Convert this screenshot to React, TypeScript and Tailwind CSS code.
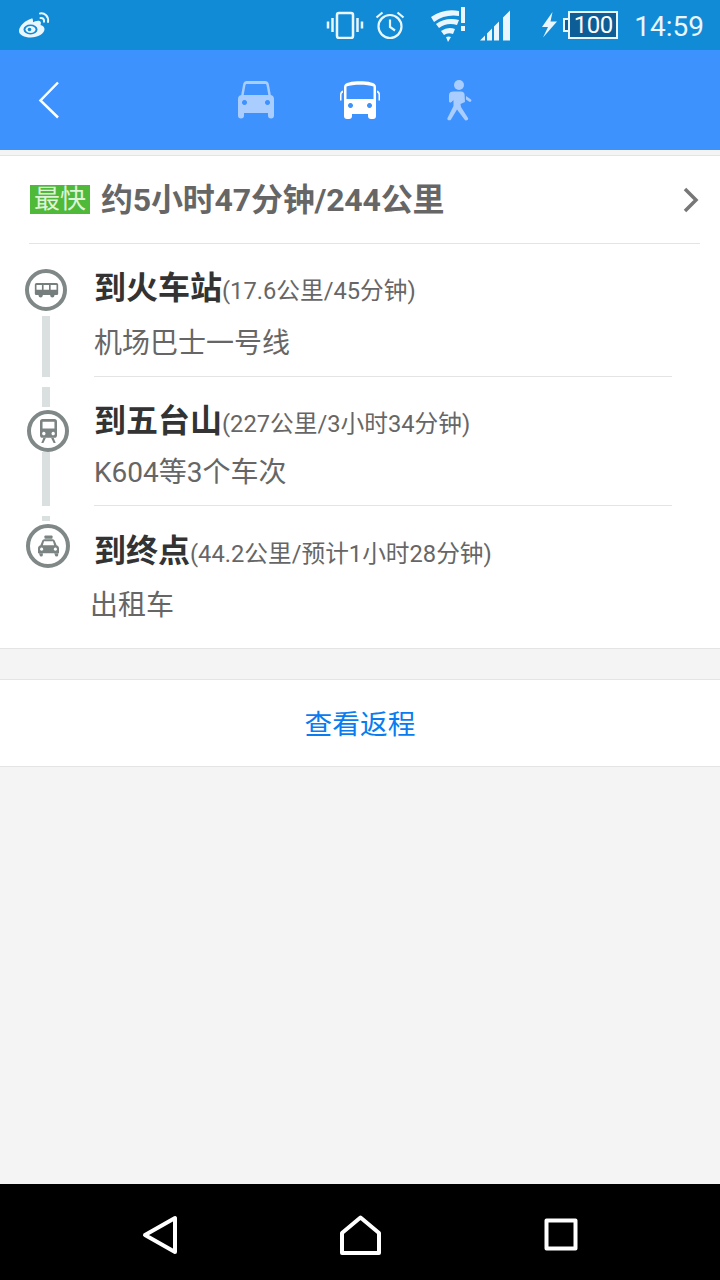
import { FunctionComponent, ReactNode } from "react";

const WeiboIcon = () => (
  <svg width="34" height="28" viewBox="0 0 34 28" fill="none">
    <path fillRule="evenodd" clipRule="evenodd" fill="#eaf6fd" d="M14 7.500C7.500 9 1 15 1 20c0 4 5.500 6.500 11.500 6.500 7.500 0 14-4 14-8.500 0-2.500-2.500-3.500-4-4 .8-2 .5-3.500-1-4-2-.6-5 .5-6.500 1.200.2-2-.5-4.500-1.500-3.700z" />
    <ellipse cx="12.500" cy="18.500" rx="7" ry="5" fill="#128bd6" />
    <ellipse cx="12.500" cy="18.500" rx="5" ry="3.500" fill="#eaf6fd" />
    <circle cx="11.500" cy="18.500" r="1.800" fill="#128bd6" />
    <path d="M22 2.500c4.500-1 9 3 8 8.500M22.500 7c2.200-.4 4 1.300 3.500 3.800" stroke="#eaf6fd" strokeWidth="2" strokeLinecap="round" />
  </svg>
);

const VibrateIcon = () => (
  <svg width="38" height="28" viewBox="0 0 38 28" fill="none" stroke="#eaf6fd">
    <rect x="11" y="2" width="16" height="25" rx="2" strokeWidth="2.500" />
    <path d="M6.500 7v14M2 10.500v7M31.500 7v14M36 10.500v7" strokeWidth="2.500" />
  </svg>
);

const AlarmIcon = () => (
  <svg width="30" height="30" viewBox="0 0 30 30" fill="none" stroke="#eaf6fd" strokeWidth="2.200">
    <circle cx="15" cy="16.500" r="11.500" />
    <path d="M15 9.500v7.500l5 3.500M1.500 7.500l6-5M28.500 7.500l-6-5" />
  </svg>
);

const WifiIcon = () => (
  <svg width="36" height="36" viewBox="0 0 36 36" fill="#eaf6fd">
    <path d="M1 10Q14 1 29 4V9Q15 7 4 15zM6 17Q16 10 29 13L27 18Q17 15 9 21zM11 24Q18 19 25 22L23 27Q18 25 14 28zM16 30Q19 29 21 30L18 35z" />
    <rect x="31" y="0" width="4" height="16" />
    <rect x="31" y="19" width="4" height="5" />
  </svg>
);

const SignalIcon = () => (
  <svg width="31" height="31" viewBox="0 0 31 31" fill="#eaf6fd">
    <path d="M0 30.500 5 25.500V30.500zM7 23.500 12 18.500V30.500H7zM14 16.500 19 11.500V30.500H14zM23 7.500 30 .5V30.500H23z" />
  </svg>
);

const BoltIcon = () => (
  <svg width="17" height="26" viewBox="0 0 17 26" fill="#eaf6fd">
    <path d="M11.500 0 1 15h6L2 25.500 16 9.500H9.500z" />
  </svg>
);

const CarIcon = () => (
  <svg width="36" height="38" viewBox="0 0 36 38" fill="#a9cdfe">
    <path fillRule="evenodd" clipRule="evenodd" d="M5 4C5.400 1.500 6.500 0 9 0h18c2.500 0 3.600 1.500 4 4l2 11h-2.500L28.500 4c-.1-.6-.5-1-1-1h-19c-.5 0-.9.4-1 1L5.500 15H3z" />
    <path fillRule="evenodd" clipRule="evenodd" d="M4 14h28c2.500 0 4 1.500 4 4v14H0V18c0-2.500 1.500-4 4-4zM6.500 19a2.500 2.500 0 1 0 .01 0zM29.500 19a2.500 2.500 0 1 0 .01 0z" />
    <path d="M0 32h6v2.500a2.800 2.800 0 0 1-6 0zM30 32h6v2.500a2.800 2.800 0 0 1-6 0z" />
  </svg>
);

const BusIcon = () => (
  <svg width="40" height="38" viewBox="0 0 40 38" fill="#fff">
    <path d="M0 14c0-2.500 1-4 3-4.500v2C2 12 1.500 13 1.500 14v5.500H0zM40 14c0-2.500-1-4-3-4.500v2c1 .5 1.500 1.500 1.500 2.500v5.500H40z" />
    <path fillRule="evenodd" clipRule="evenodd" d="M4 6c0-3 2-4 5-4.600C15 0 25 0 31 1.400c3 .6 5 1.600 5 4.600v27H4zM6.500 5.500V18h27V5.500C27 3 13 3 6.500 5.500zM10.500 22a2.500 2.500 0 1 0 .01 0zM29.500 22a2.500 2.500 0 1 0 .01 0z" />
    <path d="M4 33h8v2a3 3 0 0 1-3 3H7a3 3 0 0 1-3-3zM28 33h8v2a3 3 0 0 1-3 3h-2a3 3 0 0 1-3-3z" />
  </svg>
);

const WalkIcon = () => (
  <svg width="26" height="41" viewBox="0 0 26 41" fill="#a9cdfe">
    <circle cx="13" cy="5" r="5" />
    <path d="M8 11.500h7c2 0 3 1 3.500 2.500l.5 8-4.500 2 .5 3 7 11c1 1.800-2.500 3.500-3.500 1.500L11 29.500 5 39.500c-1 1.800-4.500.5-3.500-1.500l6-12V20l-2 2c-1 1-2.500.5-2.500-1V15c0-2.500 2-3.500 4.500-3.500z" />
    <path d="M20 16l5 3.500c1.200 1.300-.5 3-2 2l-3-2z" />
  </svg>
);

const TinyBus = () => (
  <svg width="25" height="15" viewBox="0 0 28 18" fill="#757d7d">
    <path fillRule="evenodd" clipRule="evenodd" d="M2 0h24c1 0 2 1 2 2v11c0 1-1 1.500-2 1.500H2c-1 0-2-.5-2-1.500V2C0 1 1 0 2 0zM2 2.500V8h6.500V2.500zM10.500 2.500V8H17V2.500zM19 2.500V8h7V2.500z" />
    <circle cx="7" cy="15" r="2.500" />
    <circle cx="21" cy="15" r="2.500" />
  </svg>
);

const TinyTrain = () => (
  <svg width="17" height="24" viewBox="0 0 20 28" fill="#7b8383">
    <path fillRule="evenodd" clipRule="evenodd" d="M3 0h14c2 0 3 1 3 3v16c0 2-1 3-3 3H3c-2 0-3-1-3-3V3c0-2 1-3 3-3zM3 3v8h14V3zM4.500 15a2 2 0 1 0 .01 0zM15.500 15a2 2 0 1 0 .01 0z" />
    <path d="M4 22h3l-3 6H1.500zM13 22h3l2.500 6H16z" />
  </svg>
);

const TinyTaxi = () => (
  <svg width="21" height="22" viewBox="0 0 26 26" fill="#7b8383">
    <rect x="8" y="0" width="10" height="4" rx="1" />
    <path fillRule="evenodd" clipRule="evenodd" d="M5 7c.4-1.500 1.500-2.500 3-2.500h10c1.500 0 2.600 1 3 2.500l2 5c2 .5 3 2 3 4v6H0v-6c0-2 1-3.500 3-4zM7.500 7 6 12h14l-1.500-5zM4.500 15a2 2 0 1 0 .01 0zM21.500 15a2 2 0 1 0 .01 0z" />
    <path d="M1 22h5v2a2 2 0 0 1-4 0zM20 22h5v2a2 2 0 0 1-4 0z" />
  </svg>
);

const Ring: FunctionComponent<{ size: string; children: ReactNode }> = ({ size, children }) => (
  <div className={`${size} rounded-full border-[4px] border-[#7f8787] bg-white flex items-center justify-center shrink-0`}>
    {children}
  </div>
);

const App: FunctionComponent = () => {
  return (
    <div className="w-[720px] h-[1280px] flex flex-col bg-[#f4f4f4] overflow-hidden font-['Roboto','Noto_Sans_CJK_SC',sans-serif]">
      {/* status bar */}
      <div className="h-[50px] bg-[#128bd6] flex items-center shrink-0 pl-[18px] pr-[16px]">
        <WeiboIcon />
        <div className="ml-auto flex items-center">
          <VibrateIcon />
          <div className="ml-[11px]"><AlarmIcon /></div>
          <div className="ml-[25px]"><WifiIcon /></div>
          <div className="ml-[14px]"><SignalIcon /></div>
          <div className="ml-[30px]"><BoltIcon /></div>
          <div className="ml-[5px] flex items-center">
            <div className="w-[5px] h-[14px] bg-[#0d5e96] border-2 border-r-0 border-[#eaf6fd]" />
            <div className="w-[50px] h-[28px] border-2 border-[#eaf6fd] bg-[#0d5e96] text-white text-[24px] leading-[24px] text-center tracking-[-0.5px]">
              100
            </div>
          </div>
          <div className="ml-[16px] mt-[3px] text-[#eaf6fd] text-[28px] leading-[32px]">14:59</div>
        </div>
      </div>

      {/* header */}
      <div className="relative h-[100px] bg-[#3d92fe] flex items-center justify-center gap-[66px] shrink-0 pr-[10px]">
        <svg className="absolute left-[38px] top-[31px]" width="22" height="38" viewBox="0 0 22 38" fill="none" stroke="#fff" strokeWidth="2.500">
          <path d="M20 1.500 2.500 19.500 20 36.500" />
        </svg>
        <CarIcon />
        <BusIcon />
        <WalkIcon />
      </div>

      <div className="h-[5px] bg-[#f4f4f4] shrink-0" />

      {/* route card */}
      <div className="bg-white border-y border-[#e4e4e4] shrink-0">
        <div className="mx-[29px] w-[671px] h-[88px] border-b border-[#e4e4e4] flex items-center pt-[1px]">
          <span className="w-[60px] h-[29px] bg-[#4fb93a] text-[#dff3d9] text-[26px] leading-[29px] text-center -mt-[1px] shrink-0 ml-[1px]">
            最快
          </span>
          <span className="ml-[11px] text-[#666] text-[32px] font-bold leading-[40px] tracking-[-0.2px]">约5小时47分钟/244公里</span>
          <svg className="ml-auto mr-[1px]" width="16" height="26" viewBox="0 0 16 26" fill="none" stroke="#777" strokeWidth="3.500">
            <path d="M2 2l11 11L2 24" />
          </svg>
        </div>

        {/* first leg */}
        <div className="flex h-[133px]">
          <div className="w-[94px] shrink-0 flex flex-col">
            <div className="ml-[25px] mt-[25px]">
              <Ring size="w-[42px] h-[42px]"><TinyBus /></Ring>
            </div>
            <div className="ml-[42px] mt-[5px] w-[8px] h-[61px] bg-[#dadfdf]" />
          </div>
          <div className="w-[578px] border-b border-[#e4e4e4] flex flex-col">
            <div className="mt-[22px] flex items-baseline text-[#333]">
              <span className="text-[32px] font-bold leading-[44px]">到火车站</span>
              <span className="text-[23.700px] text-[#666] leading-[44px]">(17.6公里/45分钟)</span>
            </div>
            <div className="mt-[11px] text-[28px] leading-[40px] text-[#666]">机场巴士一号线</div>
          </div>
        </div>

        {/* second leg */}
        <div className="flex h-[129px]">
          <div className="w-[94px] shrink-0 flex flex-col">
            <div className="ml-[42px] mt-[10px] w-[8px] h-[20px] bg-[#dadfdf]" />
            <div className="ml-[27px] mt-[3px]">
              <Ring size="w-[42px] h-[42px]"><TinyTrain /></Ring>
            </div>
            <div className="ml-[42px] w-[8px] h-[54px] bg-[#dadfdf]" />
          </div>
          <div className="w-[578px] border-b border-[#e4e4e4] flex flex-col">
            <div className="mt-[22px] flex items-baseline text-[#333]">
              <span className="text-[32px] font-bold leading-[44px]">到五台山</span>
              <span className="text-[23.700px] text-[#666] leading-[44px]">(227公里/3小时34分钟)</span>
            </div>
            <div className="mt-[7px] text-[28px] leading-[40px] text-[#666]">K604等3个车次</div>
          </div>
        </div>

        {/* third leg */}
        <div className="flex h-[142px]">
          <div className="w-[94px] shrink-0 flex flex-col">
            <div className="ml-[42px] mt-[10px] w-[8px] h-[5px] bg-[#dadfdf]" />
            <div className="ml-[26px] mt-[3px]">
              <Ring size="w-[44px] h-[44px]"><TinyTaxi /></Ring>
            </div>
          </div>
          <div className="flex flex-col">
            <div className="mt-[23px] flex items-baseline text-[#333]">
              <span className="text-[32px] font-bold leading-[44px]">到终点</span>
              <span className="text-[23.700px] text-[#666] leading-[44px]">(44.2公里/预计1小时28分钟)</span>
            </div>
            <div className="-ml-[4px] mt-[10px] text-[28px] leading-[40px] text-[#666]">出租车</div>
          </div>
        </div>
      </div>

      <div className="h-[30px] shrink-0" />

      <div className="h-[88px] bg-white border-y border-[#e4e4e4] flex items-center justify-center pt-[3px] text-[27.700px] text-[#0a7cf0] shrink-0">
        查看返程
      </div>

      <div className="flex-1" />

      {/* nav bar */}
      <div className="h-[96px] bg-black flex items-center shrink-0 pt-[6px]">
        <svg className="ml-[142px]" width="36" height="40" viewBox="0 0 36 40" fill="none" stroke="#fff" strokeWidth="4" strokeLinejoin="round">
          <path d="M33 3v34L3 20z" />
        </svg>
        <svg className="ml-[162px]" width="42" height="40" viewBox="0 0 42 40" fill="none" stroke="#fff" strokeWidth="4" strokeLinejoin="round">
          <path d="M20.500 2.500 39 18v20H2V18z" />
        </svg>
        <svg className="ml-[162px]" width="34" height="34" viewBox="0 0 34 34" fill="none" stroke="#fff" strokeWidth="4" strokeLinejoin="round">
          <rect x="2.500" y="2.500" width="29" height="28" />
        </svg>
      </div>
    </div>
  );
};

export default App;
